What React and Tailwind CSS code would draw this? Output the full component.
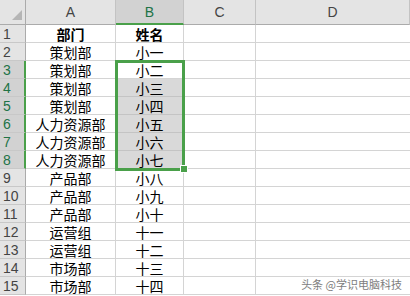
import React from "react";

const rows = [
  ["部门", "姓名"],
  ["策划部", "小一"],
  ["策划部", "小二"],
  ["策划部", "小三"],
  ["策划部", "小四"],
  ["人力资源部", "小五"],
  ["人力资源部", "小六"],
  ["人力资源部", "小七"],
  ["产品部", "小八"],
  ["产品部", "小九"],
  ["产品部", "小十"],
  ["运营组", "十一"],
  ["运营组", "十二"],
  ["市场部", "十三"],
  ["市场部", "十四"],
];

const cjk = { fontFamily: '"Noto Sans CJK SC", "Liberation Sans", sans-serif' };
const latin = { fontFamily: '"Liberation Sans", Arial, sans-serif' };

function ColHeader({ label, active }) {
  return (
    <div
      className={
        "h-[25px] flex items-center justify-center text-[14px] leading-[18px] border-r border-[#c3c3c3] " +
        (active
          ? "bg-[#d2d2d2] text-[#217346] border-b-2 border-b-[#4aa04a]"
          : "bg-[#e4e4e4] text-[#444] border-b border-b-[#ababab]")
      }
      style={latin}
    >
      {label}
    </div>
  );
}

export default function App() {
  return (
    <div className="relative w-[410px] h-[296px] overflow-hidden bg-white">
      <div className="grid grid-cols-[26px_90px_68px_72px_1fr]">
        {/* corner */}
        <div className="relative h-[25px] bg-[#e4e4e4] border-r border-b border-[#ababab]">
          <svg className="absolute right-[3px] bottom-[4px]" width="10" height="10" viewBox="0 0 10 10">
            <polygon points="10,0 10,10 0,10" fill="#b5b5b5" />
          </svg>
        </div>
        <ColHeader label="A" />
        <ColHeader label="B" active />
        <ColHeader label="C" />
        <ColHeader label="D" />

        {rows.map(([dept, name], i) => {
          const n = i + 1;
          const sel = n >= 3 && n <= 8;
          const shaded = n >= 4 && n <= 8;
          const bold = n === 1;
          return (
            <React.Fragment key={n}>
              <div
                className={
                  "h-[18px] flex items-center pl-[3px] text-[14px] leading-[16px] border-b border-[#c8c8c8] " +
                  (sel
                    ? "bg-[#d2d2d2] text-[#217346] border-r-2 border-r-[#4aa04a]"
                    : "bg-[#e4e4e4] text-[#444] border-r border-r-[#ababab]")
                }
                style={latin}
              >
                {n}
              </div>
              <div
                className={
                  "h-[18px] flex items-center justify-center text-[14px] leading-[16px] text-black border-r border-b border-[#d4d4d4] " +
                  (bold ? "font-bold" : "")
                }
                style={cjk}
              >
                {dept}
              </div>
              <div
                className={
                  "h-[18px] flex items-center justify-center text-[14px] leading-[16px] text-black border-r border-b " +
                  (shaded ? "bg-[#d9d9d9] border-[#c4c4c4] " : "border-[#d4d4d4] ") +
                  (bold ? "font-bold" : "")
                }
                style={cjk}
              >
                {name}
              </div>
              <div className="h-[18px] border-r border-b border-[#d4d4d4]" />
              <div className="h-[18px] border-b border-[#d4d4d4]" />
            </React.Fragment>
          );
        })}
      </div>

      {/* selection outline with fill handle */}
      <div className="absolute left-[115px] top-[60px] w-[70px] h-[111px] border-[3px] border-[#4aa04a] pointer-events-none" />
      <div className="absolute left-[180px] top-[165px] w-[8px] h-[8px] bg-[#4aa04a] border border-white" />

      {/* watermark */}
      <div
        className="absolute right-[8px] bottom-[5px] text-[11px] leading-[13px] text-[#7d7d7d]"
        style={{ ...cjk, textShadow: "0 0 2px #fff, 0 0 2px #fff" }}
      >
        头条 @学识电脑科技
      </div>
    </div>
  );
}
